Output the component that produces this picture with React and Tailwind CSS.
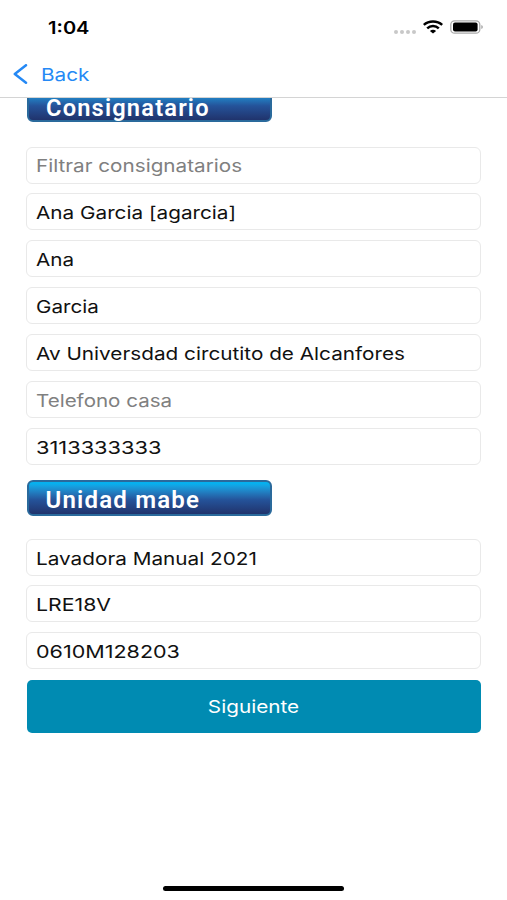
import React from "react";

const consignee = [
  { placeholder: "Filtrar consignatarios", fit: "scale-x-[1.182]" },
  { value: "Ana Garcia [agarcia]", fit: "scale-x-[1.185]" },
  { value: "Ana", fit: "scale-x-[1.18]" },
  { value: "Garcia", fit: "scale-x-[1.18]" },
  { value: "Av Universdad circutito de Alcanfores", fit: "scale-x-[1.185]" },
  { placeholder: "Telefono casa", fit: "scale-x-[1.175]" },
  { value: "3113333333", fit: "scale-x-[1.245]" },
];

const unit = [
  { value: "Lavadora Manual 2021", fit: "scale-x-[1.185]" },
  { value: "LRE18V", fit: "scale-x-[1.215]" },
  { value: "0610M128203", fit: "scale-x-[1.23]" },
];

const Field = ({ value, placeholder, fit }) => (
  <div className="flex h-[37px] items-center rounded-[6px] border border-[#e9e9e9] bg-white pt-[3px] pl-[9px]">
    <span
      className={`origin-left whitespace-nowrap ${fit} ${value ? "text-[#111]" : "text-[#808080]"}`}
    >
      {value || placeholder}
    </span>
  </div>
);

const Banner = ({ title, fit }) => (
  <div className="ml-[0.5px] flex h-9 w-[245px] items-center rounded-[6px] border-2 border-[#2a6a9c] bg-linear-to-b from-[#06b0ee] from-10% via-[#24539a] via-55% to-[#1f2f66] bg-origin-border pl-[17px]">
    <span
      className={`origin-left whitespace-nowrap font-[Roboto,sans-serif] text-[24px] leading-none font-semibold tracking-[1.2px] text-white ${fit}`}
    >
      {title}
    </span>
  </div>
);

const StatusBar = () => (
  <div className="flex h-[54px] items-center justify-between pr-[23px] pl-12">
    <span className="mt-[3px] origin-left scale-x-[1.18] text-[17px] font-semibold text-black">1:04</span>
    <div className="flex items-center">
      {/* No cellular signal */}
      <div className="mt-[9px] mr-[7px] flex gap-[2px]">
        {[0, 1, 2, 3].map((i) => (
          <span key={i} className="h-1 w-1 rounded-full bg-[#c8c8c8]" />
        ))}
      </div>
      <svg width="20" height="14" viewBox="0 0 20 14" fill="none" stroke="#000" strokeWidth="2.5">
        <path d="M0.8 4.9C5.8 0.3 14.2 0.3 19.2 4.9" />
        <path d="M4.2 8.3C7.4 5.3 12.6 5.3 15.8 8.3" />
        <path d="M10 13.6L6.9 10.9C8.7 9.4 11.3 9.4 13.1 10.9Z" fill="#000" stroke="none" />
      </svg>
      <svg className="ml-[7px]" width="34" height="14" viewBox="0 0 34 14">
        <rect x="0.8" y="0.8" width="29" height="12.4" rx="3.8" fill="none" stroke="#aaa" strokeWidth="1.3" />
        <rect x="3" y="2.6" width="24.6" height="8.8" rx="2" fill="#000" />
        <path d="M31.4 5v4c1.8-.6 1.8-3.4 0-4Z" fill="#999" />
      </svg>
    </div>
  </div>
);

const App = () => {
  return (
    <div className="flex h-[900px] w-[507px] flex-col overflow-hidden bg-white font-[Inter,sans-serif] text-[17.5px]">
      <StatusBar />

      {/* Navigation bar */}
      <div className="flex h-11 shrink-0 items-center border-b border-[#d4d4d4] pb-[3px] pl-[13px] text-[#2589f5]">
        <svg width="15" height="20" viewBox="0 0 15 20" fill="none" stroke="currentColor" strokeWidth="2.5" strokeLinecap="round" strokeLinejoin="round">
          <path d="M13 1.2L1.8 10L13 18.8" />
        </svg>
        <span className="mt-[3px] ml-[13px] origin-left scale-x-[1.185]">Back</span>
      </div>

      {/* Scrolled form, the first banner is partly under the bar */}
      <div className="flex-1 overflow-hidden px-[26px]">
        <div className="-mt-3">
          <Banner title="Consignatario" fit="scale-x-[0.985] pt-[8px]" />
        </div>
        <div className="mt-[24.5px] flex flex-col gap-[9.9px]">
          {consignee.map((item, i) => (
            <Field key={i} {...item} />
          ))}
        </div>

        <div className="mt-[15px]">
          <Banner title="Unidad mabe" fit="scale-x-[1] pt-[4px]" />
        </div>
        <div className="mt-[22.8px] flex flex-col gap-[9.8px]">
          {unit.map((item, i) => (
            <Field key={i} {...item} />
          ))}
          <button className="mt-[0.7px] ml-px flex h-[53px] items-center justify-center rounded-[5px] bg-[#008bb2] pt-[2px] text-white">
            <span className="scale-x-[1.185]">Siguiente</span>
          </button>
        </div>
      </div>

      {/* Home indicator */}
      <div className="mb-[9px] h-[5px] w-[181px] shrink-0 self-center rounded-full bg-black" />
    </div>
  );
};

export default App;
